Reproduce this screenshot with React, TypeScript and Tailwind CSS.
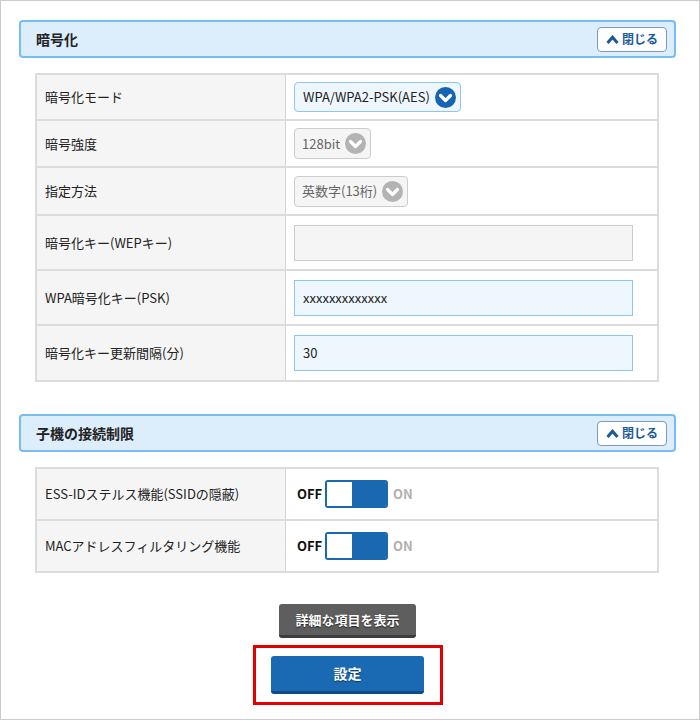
import React from "react";

const font = { fontFamily: '"Noto Sans CJK JP", "Noto Sans", sans-serif' };

function ChevronCircle({ color }: { color: string }) {
  return (
    <svg width="21" height="21" viewBox="0 0 21 21" className="shrink-0">
      <circle cx="10.5" cy="10.5" r="10.5" fill={color} />
      <path d="M5.5 8.5 L10.5 13.5 L15.5 8.5" fill="none" stroke="#fff" strokeWidth="3.2" strokeLinecap="round" strokeLinejoin="round" />
    </svg>
  );
}

function CloseBtn() {
  return (
    <div className="w-[70px] h-[25px] bg-white border border-[#7a9cc0] rounded-[4px] flex items-center justify-center gap-[3px] text-[12px] font-bold text-[#1b5a9a]">
      <svg width="13" height="9" viewBox="0 0 13 9">
        <path d="M1.5 8 L6.5 2.2 L11.5 8" fill="none" stroke="#1b5a9a" strokeWidth="3" strokeLinejoin="miter" />
      </svg>
      <span>閉じる</span>
    </div>
  );
}

function Header({ title }: { title: string }) {
  return (
    <div className="w-[657px] h-[38px] border-2 border-[#78bdf0] bg-[#dcedfc] rounded-[4px] flex items-center justify-between pl-[15px] pr-[7px]">
      <span className="text-[14px] font-bold text-[#222]">{title}</span>
      <CloseBtn />
    </div>
  );
}

function Row({ label, h, children, last }: { label: string; h: string; children?: React.ReactNode; last?: boolean }) {
  return (
    <div className={`flex ${h} ${last ? "" : "border-b-2 border-[#dcdcdc]"}`}>
      <div className="w-[249px] shrink-0 bg-[#f5f5f5] border-r border-[#d4d4d4] flex items-center pl-[8px] text-[13px] text-[#222] whitespace-nowrap">{label}</div>
      <div className="flex-1 flex items-center pl-[8px]">{children}</div>
    </div>
  );
}

function Toggle() {
  return (
    <div className="flex items-center">
      <span className="text-[13px] font-bold text-[#111] w-[31px] pl-[3px]">OFF</span>
      <div className="w-[63px] h-[28px] border-2 border-[#1a68b0] rounded-[3px] flex overflow-hidden">
        <div className="w-[25px] bg-white" />
        <div className="flex-1 bg-[#1a68b0]" />
      </div>
      <span className="text-[13px] font-bold text-[#b0b0b0] ml-[5px]">ON</span>
    </div>
  );
}

export default function App() {
  return (
    <div style={font} className="w-[700px] h-[720px] border border-[#cccccc] bg-white pt-[19px] pl-[18px]">
      <Header title="暗号化" />
      <div className="w-[624px] ml-[16px] mt-[15px] border-2 border-[#dcdcdc]">
        <Row label="暗号化モード" h="h-[46px]">
          <div className="h-[30px] border border-[#8ec6f0] bg-[#eef7fe] rounded-[4px] flex items-center gap-[5px] pl-[8px] pr-[4px] text-[13px] text-[#222] whitespace-nowrap">
            <span>WPA/WPA2-PSK(AES)</span>
            <ChevronCircle color="#1765b0" />
          </div>
        </Row>
        <Row label="暗号強度" h="h-[47px]">
          <div className="h-[31px] border border-[#cccccc] bg-[#f5f5f5] rounded-[4px] flex items-center gap-[5px] pl-[7px] pr-[4px] text-[13px] text-[#666] whitespace-nowrap">
            <span>128bit</span>
            <ChevronCircle color="#b3b3b3" />
          </div>
        </Row>
        <Row label="指定方法" h="h-[48px]">
          <div className="h-[31px] border border-[#cccccc] bg-[#f5f5f5] rounded-[4px] flex items-center gap-[5px] pl-[7px] pr-[4px] text-[13px] text-[#666] whitespace-nowrap">
            <span>英数字(13桁)</span>
            <ChevronCircle color="#b3b3b3" />
          </div>
        </Row>
        <Row label="暗号化キー(WEPキー)" h="h-[55px]">
          <div className="w-[339px] h-[36px] border border-[#cccccc] bg-[#f5f5f5]" />
        </Row>
        <Row label="WPA暗号化キー(PSK)" h="h-[55px]">
          <div className="w-[339px] h-[36px] border border-[#8ec6f0] bg-[#eef7fe] flex items-center pl-[8px] text-[13px] text-[#222]">xxxxxxxxxxxxx</div>
        </Row>
        <Row label="暗号化キー更新間隔(分)" h="h-[54px]" last>
          <div className="w-[339px] h-[36px] border border-[#8ec6f0] bg-[#eef7fe] flex items-center pl-[8px] text-[13px] text-[#222]">30</div>
        </Row>
      </div>

      <div className="mt-[32px]">
        <Header title="子機の接続制限" />
      </div>
      <div className="w-[624px] ml-[16px] mt-[15px] border-2 border-[#dcdcdc]">
        <Row label="ESS-IDステルス機能(SSIDの隠蔽)" h="h-[52px]">
          <Toggle />
        </Row>
        <Row label="MACアドレスフィルタリング機能" h="h-[50px]" last>
          <Toggle />
        </Row>
      </div>

      <div className="w-[657px] flex flex-col items-center mt-[31px]">
        <div className="w-[137px] h-[34px] rounded-[3px] bg-[#5e5e5e] border-b-[3px] border-[#3c3c3c] flex items-center justify-center text-[13px] font-bold text-white [text-shadow:0_1px_1px_#222]">
          詳細な項目を表示
        </div>
        <div className="mt-[7px] w-[190px] h-[60px] border-[3px] border-[#e60000] flex items-center justify-center">
          <div className="w-[153px] h-[38px] rounded-[3px] bg-[#1a6ab3] border-b-[3px] border-[#0f4a82] flex items-center justify-center text-[14px] font-bold text-white [text-shadow:0_1px_1px_#0a3a66]">
            設定
          </div>
        </div>
      </div>
    </div>
  );
}
